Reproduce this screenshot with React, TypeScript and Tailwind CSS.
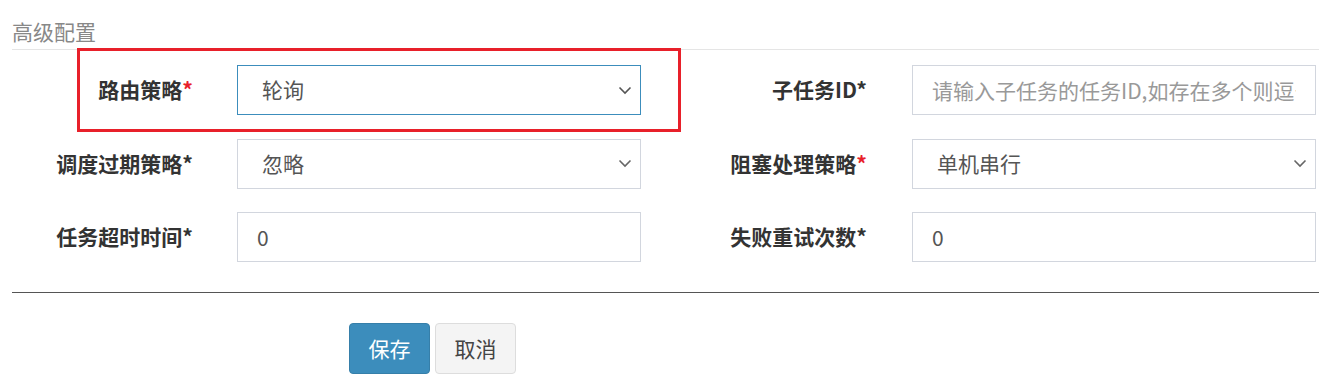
import React from 'react'

const font = { fontFamily: '"Noto Sans CJK SC", "Liberation Sans", sans-serif' }

function Chevron({ dark }: { dark?: boolean }) {
  return (
    <svg width="14" height="9" viewBox="0 0 14 9" className="shrink-0">
      <path d="M1.5 1.5 L7 7 L12.5 1.5" fill="none" stroke={dark ? '#555' : '#666'} strokeWidth="1.6" />
    </svg>
  )
}

function Label({ text, red, width }: { text: string; red?: boolean; width: string }) {
  return (
    <div className={`${width} shrink-0 text-right text-[21px] font-bold text-[#333]`}>
      {text}
      <span className={red ? 'text-[#e8202a]' : 'text-[#333]'}>*</span>
    </div>
  )
}

function Select({ value, focused }: { value: string; focused?: boolean }) {
  return (
    <div
      className={`flex h-[50px] w-[404px] shrink-0 items-center justify-between border bg-white pl-[24px] pr-[8px] text-[21px] text-[#555] ${
        focused ? 'border-[#3c8dbc]' : 'border-[#d2d6de]'
      }`}
    >
      <span>{value}</span>
      <Chevron dark={focused} />
    </div>
  )
}

function Input({ value, placeholder }: { value?: string; placeholder?: string }) {
  return (
    <input
      readOnly
      value={value ?? ''}
      placeholder={placeholder}
      className="h-[50px] w-[404px] shrink-0 border border-[#d2d6de] bg-white px-[19px] text-[21px] text-[#555] outline-none placeholder:text-[#999]"
      style={font}
    />
  )
}

export default function App() {
  return (
    <div className="relative w-[1331px] h-[387px] bg-white px-[12px]" style={font}>
      {/* 标题 */}
      <div className="pt-[17px]">
        <h3 className="border-b border-[#e5e5e5] pb-[4px] text-[21px] leading-[28px] font-normal text-[#888]">高级配置</h3>
      </div>

      {/* 表单 */}
      <div className="mt-[15px] flex flex-col gap-[23.5px]">
        <div className="flex items-center">
          <Label text="路由策略" red width="w-[225px] pr-[44px]" />
          <Select value="轮询" focused />
          <Label text="子任务ID" width="w-[271px] pr-[45px]" />
          <Input placeholder="请输入子任务的任务ID,如存在多个则逗号分隔" />
        </div>
        <div className="flex items-center">
          <Label text="调度过期策略" width="w-[225px] pr-[44px]" />
          <Select value="忽略" />
          <Label text="阻塞处理策略" red width="w-[271px] pr-[45px]" />
          <Select value="单机串行" />
        </div>
        <div className="flex items-center">
          <Label text="任务超时时间" width="w-[225px] pr-[44px]" />
          <Input value="0" />
          <Label text="失败重试次数" width="w-[271px] pr-[45px]" />
          <Input value="0" />
        </div>
      </div>

      <div className="mt-[30px] border-t border-[#555]" />

      {/* 按钮 */}
      <div className="mt-[30px] flex gap-[5px] pl-[337px]">
        <button className="h-[51px] w-[81px] rounded-[4px] border border-[#367fa9] bg-[#3c8dbc] text-[21px] text-white">保存</button>
        <button className="h-[51px] w-[81px] rounded-[4px] border border-[#ddd] bg-[#f4f4f4] text-[21px] text-[#444]">取消</button>
      </div>

      {/* 标注框 */}
      <div className="pointer-events-none absolute left-[77px] top-[48px] h-[84px] w-[604px] border-[3px] border-[#e8202a]" />
    </div>
  )
}
